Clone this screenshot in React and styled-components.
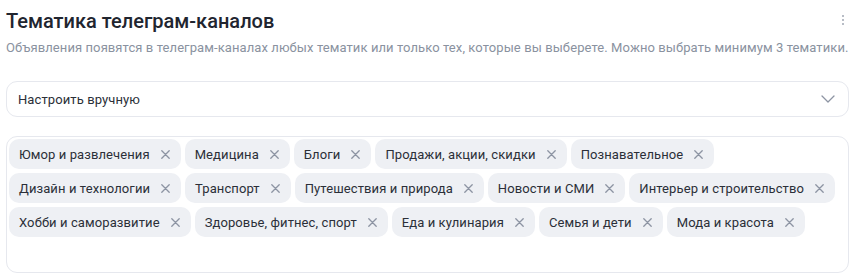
import React from "react";
import styled, { createGlobalStyle } from "styled-components";

const GlobalStyle = createGlobalStyle`
  body {
    margin: 0;
    background: #ffffff;
    font-family: Roboto, "Noto Sans", Arial, sans-serif;
    color: #21252f;
  }
`;

const topics = [
  "Юмор и развлечения",
  "Медицина",
  "Блоги",
  "Продажи, акции, скидки",
  "Познавательное",
  "Дизайн и технологии",
  "Транспорт",
  "Путешествия и природа",
  "Новости и СМИ",
  "Интерьер и строительство",
  "Хобби и саморазвитие",
  "Здоровье, фитнес, спорт",
  "Еда и кулинария",
  "Семья и дети",
  "Мода и красота",
];

const Section = styled.section`
  padding: 7px 6px 0 6px;
  width: 843px;
`;

const Header = styled.div`
  display: flex;
  align-items: flex-start;
  justify-content: space-between;
`;

const Title = styled.h2`
  margin: 0;
  font-size: 20px;
  line-height: 28px;
  font-weight: 500;
  color: #21252f;
`;

const MenuButton = styled.button`
  border: none;
  background: none;
  padding: 0;
  margin: 8px 5px 0 0;
  display: flex;
  flex-direction: column;
  gap: 2px;
  cursor: pointer;
  > span {
    width: 2px;
    height: 2px;
    border-radius: 50%;
    background: #a1a7b3;
  }
`;

const Hint = styled.p`
  margin: 4px 0 0 0;
  font-size: 13px;
  line-height: 18px;
  letter-spacing: 0.09px;
  color: #8a92a0;
  white-space: nowrap;
`;

const Select = styled.div`
  margin-top: 24px;
  height: 34px;
  border: 1px solid #e6e8ee;
  border-radius: 11px;
  display: flex;
  align-items: center;
  justify-content: space-between;
  padding: 0 13px 0 11px;
  font-size: 13px;
  letter-spacing: 0.1px;
  color: #2b2f38;
`;

const TagBox = styled.div`
  margin-top: 19px;
  height: 137px;
  box-sizing: border-box;
  border: 1px solid #e6e8ee;
  border-radius: 11px;
  padding: 2px 4px 0 2px;
  display: flex;
  flex-wrap: wrap;
  align-content: flex-start;
  gap: 4px 4px;
`;

const Chip = styled.span`
  display: inline-flex;
  align-items: center;
  gap: 11px;
  height: 30px;
  padding: 0 11px 0 10px;
  border-radius: 10px;
  background: #eef0f4;
  font-size: 13px;
  letter-spacing: 0.1px;
  color: #2b2f38;
  white-space: nowrap;
`;

const Remove = styled.svg`
  width: 9px;
  height: 9px;
  flex: none;
`;

const Cross = () => (
  <Remove viewBox="0 0 9 9">
    <path d="M0.8 0.8L8.2 8.2M8.2 0.8L0.8 8.2" stroke="#8d94a3" strokeWidth="1.3" strokeLinecap="round" />
  </Remove>
);

const Chevron = () => (
  <svg width="14" height="8" viewBox="0 0 14 8">
    <path d="M1 1l6 6 6-6" fill="none" stroke="#8d94a3" strokeWidth="1.3" strokeLinecap="round" strokeLinejoin="round" />
  </svg>
);

export default function App() {
  return (
    <>
      <GlobalStyle />
      <Section>
        <Header>
          <Title>Тематика телеграм-каналов</Title>
          <MenuButton aria-label="Ещё">
            <span />
            <span />
            <span />
          </MenuButton>
        </Header>
        <Hint>
          Объявления появятся в телеграм-каналах любых тематик или только тех, которые вы выберете. Можно выбрать минимум 3 тематики.
        </Hint>
        <Select>
          <span>Настроить вручную</span>
          <Chevron />
        </Select>
        <TagBox>
          {topics.map((t) => (
            <Chip key={t}>
              {t}
              <Cross />
            </Chip>
          ))}
        </TagBox>
      </Section>
    </>
  );
}
